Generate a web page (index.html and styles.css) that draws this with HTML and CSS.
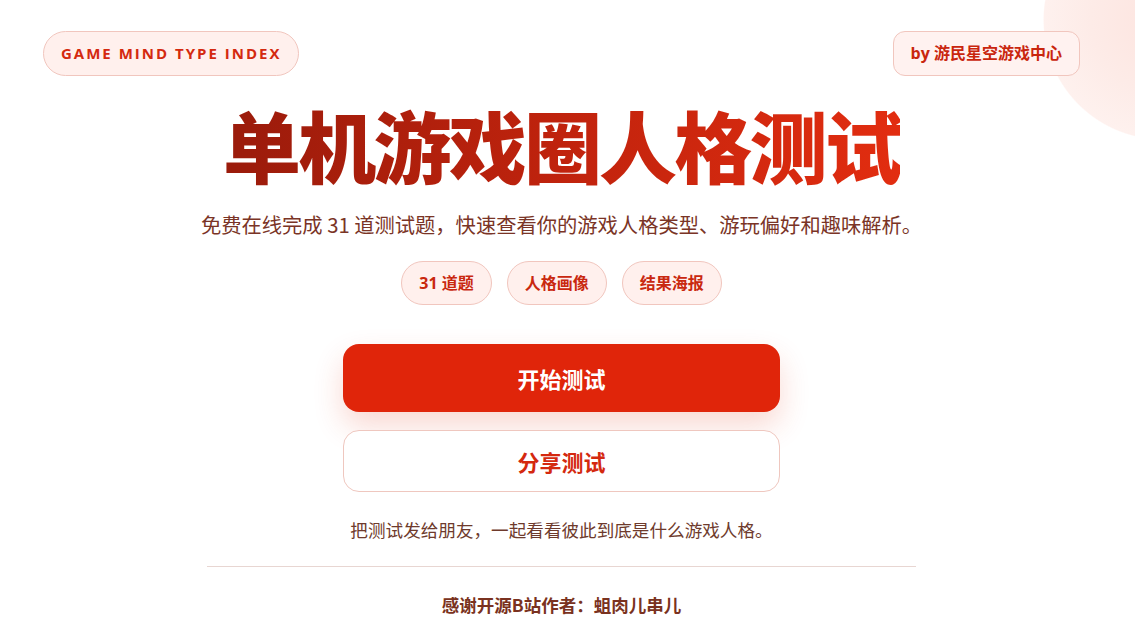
FILE: index.html
```html
<!DOCTYPE html>
<html lang="zh-CN">
<head>
    <meta charset="UTF-8">
    <meta name="viewport" content="width=device-width, initial-scale=1.0">
    <title>单机游戏圈人格测试</title>
    <link rel="stylesheet" href="styles.css">
</head>
<body>
    <div class="deco-corner"></div>
    <main class="page">
        <header class="top-bar">
            <span class="brand-pill">GAME MIND TYPE INDEX</span>
            <span class="by-tag">by 游民星空游戏中心</span>
        </header>

        <section class="hero">
            <h1 class="title">单机游戏圈人格测试</h1>
            <p class="subtitle">免费在线完成 31 道测试题，快速查看你的游戏人格类型、游玩偏好和趣味解析。</p>
            <div class="chips">
                <span class="chip">31 道题</span>
                <span class="chip">人格画像</span>
                <span class="chip">结果海报</span>
            </div>

            <div class="actions">
                <button class="btn btn-start">开始测试</button>
                <button class="btn btn-share">分享测试</button>
            </div>
            <p class="share-hint">把测试发给朋友，一起看看彼此到底是什么游戏人格。</p>
        </section>

        <footer class="credits">
            <p>感谢开源B站作者：蛆肉儿串儿</p>
        </footer>
    </main>
</body>
</html>
```

FILE: styles.css
```css
html,
body {
    overflow: hidden;
}

body {
    position: relative;
    margin: 0;
    padding: 0;
    background-color: #fff;
    color: #7a3a2a;
    font-family: 'Open Sans', 'Noto Sans CJK SC', sans-serif;
}

/* pale circle in the top right corner */
.deco-corner {
    position: absolute;
    top: 0;
    right: 0;
    width: 92px;
    height: 141px;
    background: radial-gradient(circle 120px at 120px 20px, #fde4df 0%, #fdebe7 60%, #fef1ee 99%, rgba(255, 255, 255, 0) 100%);
}

.page {
    position: relative;
    width: 1037px;
    margin-left: 43px;
    padding-top: 31px;
}

.top-bar {
    display: flex;
    justify-content: space-between;
    align-items: center;
}

.brand-pill {
    display: inline-block;
    box-sizing: border-box;
    height: 45px;
    line-height: 43px;
    padding: 0 17px;
    border: 1px solid #f1c6be;
    border-radius: 23px;
    background-color: #fff0ed;
    color: #d4290f;
    font-size: 15px;
    font-weight: 700;
    letter-spacing: 2px;
}

.by-tag {
    display: inline-block;
    box-sizing: border-box;
    height: 45px;
    line-height: 43px;
    padding: 0 17px;
    border: 1px solid #f1c6be;
    border-radius: 12px;
    background-color: #fff2f0;
    color: #c9260e;
    font-size: 16px;
    font-weight: 700;
}

.hero {
    display: flex;
    flex-direction: column;
    align-items: center;
    text-align: center;
}

.title {
    margin: 24px 0 0;
    font-family: 'Noto Sans CJK SC', sans-serif;
    font-size: 78px;
    font-weight: 900;
    line-height: 88px;
    letter-spacing: -2.8px;
    background: linear-gradient(90deg, #9a1b0b 0%, #c0230d 50%, #e22d10 100%);
    -webkit-background-clip: text;
    background-clip: text;
    color: transparent;
}

.subtitle {
    margin: 22px 0 0;
    font-family: 'Noto Sans CJK SC', sans-serif;
    font-size: 20.3px;
    line-height: 29px;
    color: #7a3426;
}

.chips {
    display: flex;
    gap: 15px;
    margin-top: 22px;
}

.chip {
    box-sizing: border-box;
    height: 44px;
    line-height: 42px;
    padding: 0 17px;
    border: 1px solid #f1c6be;
    border-radius: 22px;
    background-color: #fff0ed;
    color: #c9280f;
    font-size: 16px;
    font-weight: 700;
}

.actions {
    display: flex;
    flex-direction: column;
    gap: 18px;
    margin-top: 39px;
    width: 437px;
}

.btn {
    box-sizing: border-box;
    width: 100%;
    border-radius: 16px;
    font-family: 'Noto Sans CJK SC', sans-serif;
    font-size: 22px;
    font-weight: 700;
    cursor: pointer;
}

.btn-start {
    height: 68px;
    border: none;
    background-color: #e0250a;
    color: #fff;
    box-shadow: 0 14px 30px rgba(224, 60, 30, 0.2);
}

.btn-share {
    height: 62px;
    border: 1px solid #efc7bf;
    background-color: #fff;
    color: #d4290f;
}

.share-hint {
    margin: 25px 0 0;
    font-family: 'Noto Sans CJK SC', sans-serif;
    font-size: 17.6px;
    line-height: 25px;
    color: #6e3a2c;
}

.credits {
    width: 709px;
    margin: 24px auto 0;
    padding-top: 25px;
    border-top: 1px solid #e8d6d2;
    text-align: center;
}

.credits p {
    margin: 0;
    font-family: 'Noto Sans CJK SC', sans-serif;
    font-size: 17.5px;
    line-height: 25px;
    font-weight: 700;
    color: #7a3220;
}
```
